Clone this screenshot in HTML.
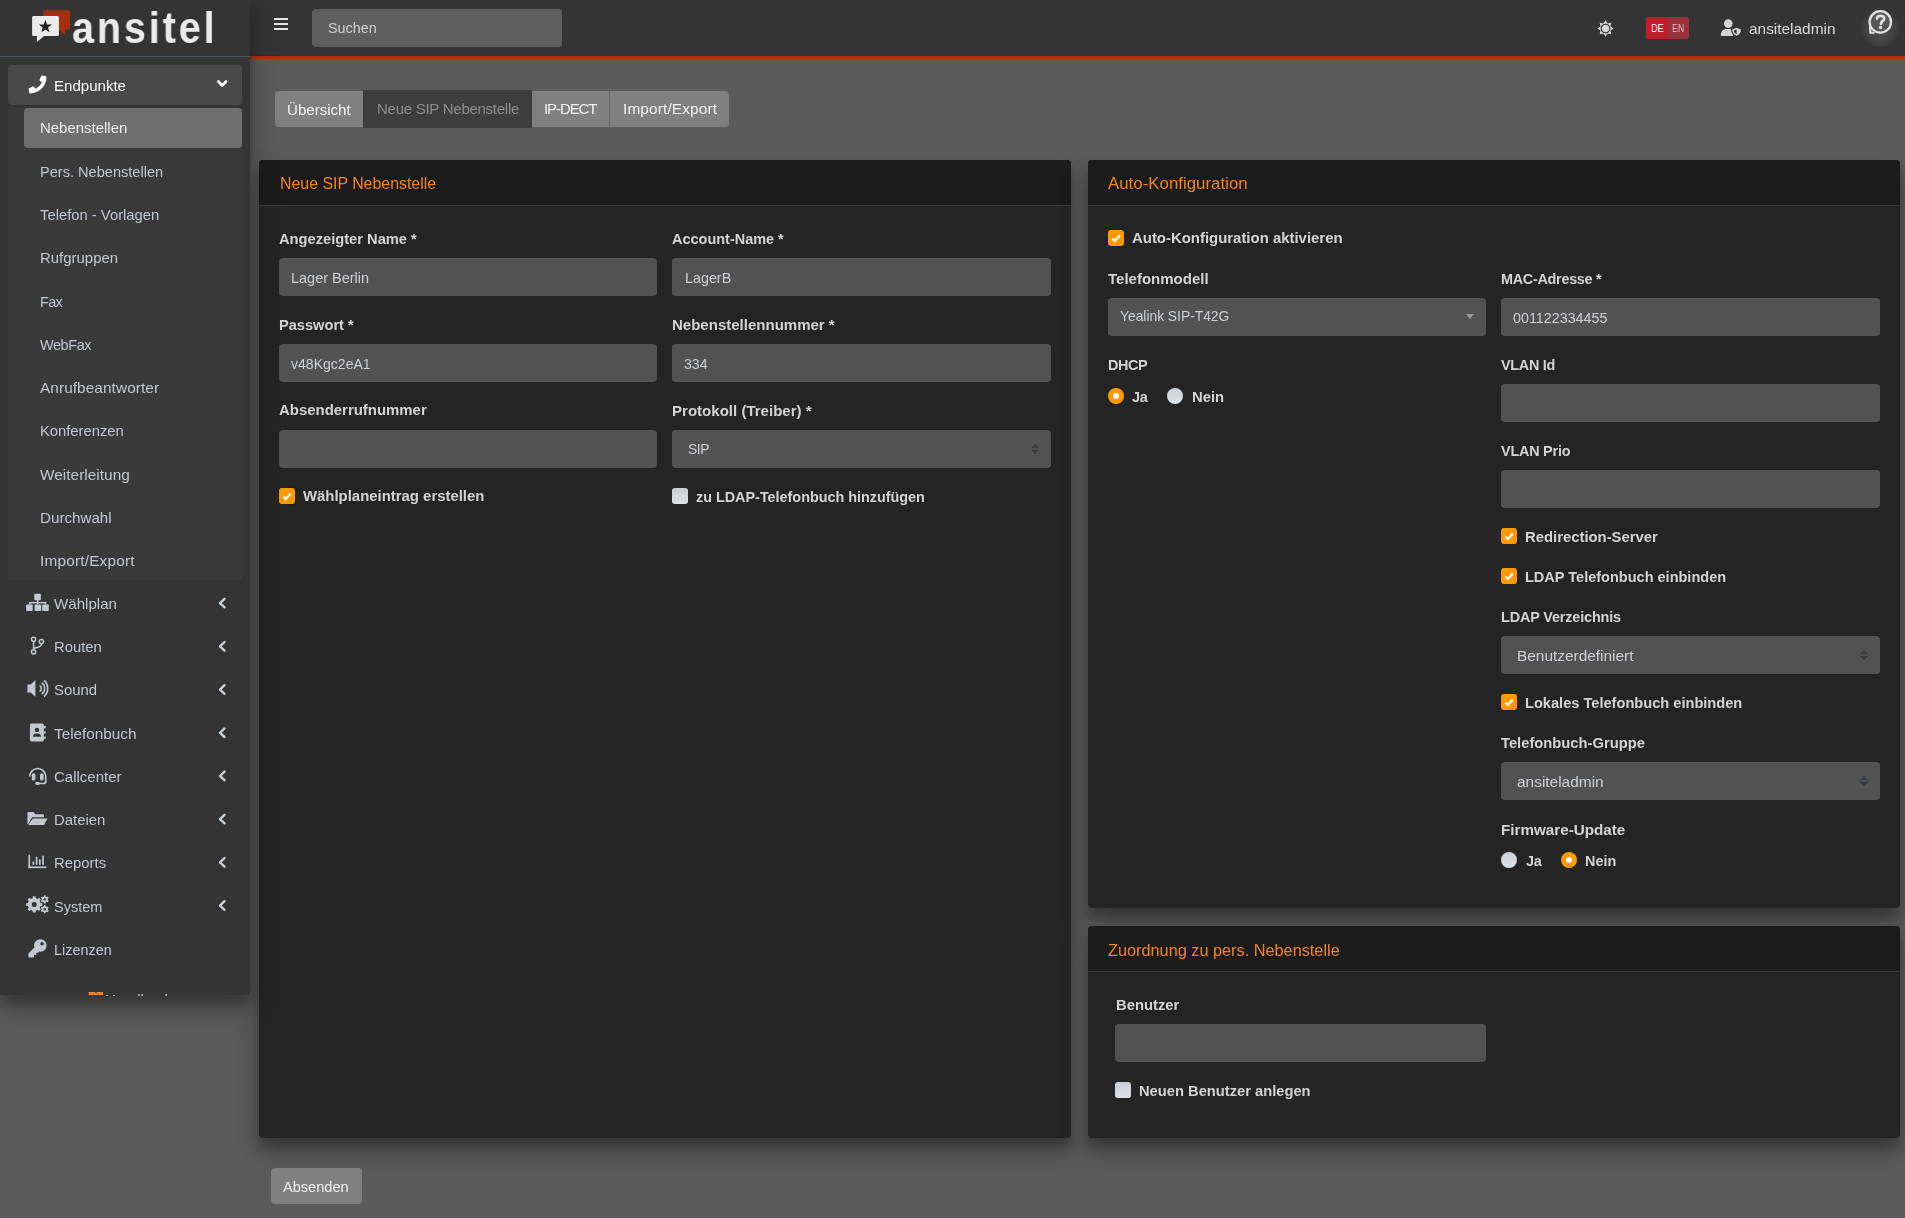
<!DOCTYPE html>
<html lang="de"><head><meta charset="utf-8"><title>ansitel</title>
<style>
*{box-sizing:border-box;margin:0;padding:0}
html,body{width:1905px;height:1218px;overflow:hidden}
body{background:#5b5b5b;font-family:"Liberation Sans",sans-serif;position:relative}
.a{position:absolute}
.t{position:absolute;z-index:10;will-change:transform;white-space:nowrap;font-family:"Liberation Sans",sans-serif}
.nav{left:250px;top:0;width:1655px;height:56px;background:#343434;border-bottom:1px solid #2b3135}
.red{left:250px;top:56px;width:1655px;height:3px;background:#ae300a}
.red2{left:250px;top:59px;width:1655px;height:1px;background:#585d61}
.side{left:0;top:0;width:250px;height:995px;background:#343434;box-shadow:0 14px 28px rgba(0,0,0,.25),0 10px 10px rgba(0,0,0,.22);overflow:hidden;z-index:5}
.brandline{left:0;top:56px;width:250px;height:1px;background:#4b545c}
.ep{left:8px;top:65px;width:234px;height:40px;background:#494949;border-radius:4px}
.tree{left:8px;top:108px;width:234px;height:472px;background:#3a3a3a}
.act{left:24px;top:108px;width:218px;height:40px;background:#6f6f6f;border-radius:4px}
.card{background:#242424;border-radius:4px;box-shadow:0 14px 28px rgba(0,0,0,.25),0 10px 10px rgba(0,0,0,.22);overflow:hidden}
.ch{position:absolute;left:0;top:0;width:100%;height:46px;background:#1b1b1b;border-bottom:1px solid #353b40}
.inp{background:#525252;border-radius:4px;height:38px}
.cb{width:16px;height:16px;border-radius:3px;background:#fe9a00;box-shadow:0 0 0 1px rgba(20,30,40,.5)}
.cbu{width:16px;height:16px;border-radius:3px;background:linear-gradient(#c9ced4,#dfe3e8)}
.rd{width:16px;height:16px;border-radius:50%;background:#fe9a00}
.rd::after{content:"";position:absolute;left:5px;top:5px;width:6px;height:6px;border-radius:50%;background:#fff}
.rdu{width:16px;height:16px;border-radius:50%;background:linear-gradient(#c9ced4,#dfe3e8)}
.btn{background:#808080}

</style></head>
<body>
<div class="a nav"></div>
<div class="a red"></div>
<div class="a red2"></div>
<!-- hamburger -->
<div class="a" style="left:274px;top:18px;width:14px;height:2px;background:#e6e6e6"></div>
<div class="a" style="left:274px;top:23px;width:14px;height:2px;background:#e6e6e6"></div>
<div class="a" style="left:274px;top:28px;width:14px;height:2px;background:#e6e6e6"></div>
<!-- search -->
<div class="a" style="left:312px;top:9px;width:250px;height:38px;background:#5e5e5e;border-radius:4px"></div>
<!-- sun -->
<svg class="a" style="left:1597px;top:19.5px" width="17" height="17" viewBox="0 0 17 17">
<polygon points="8.50,0.30 10.57,3.51 14.30,2.70 13.49,6.43 16.70,8.50 13.49,10.57 14.30,14.30 10.57,13.49 8.50,16.70 6.43,13.49 2.70,14.30 3.51,10.57 0.30,8.50 3.51,6.43 2.70,2.70 6.43,3.51" fill="#d6d6d6"/>
<circle cx="8.5" cy="8.5" r="4.3" fill="#d6d6d6" stroke="#2e2e2e" stroke-width="1.1"/>
</svg>
<!-- DE EN -->
<div class="a" style="left:1646px;top:17px;width:43px;height:22px;border-radius:3px;overflow:hidden">
<div class="a" style="left:0;top:0;width:22px;height:22px;background:#c11f2e"></div>
<div class="a" style="left:22px;top:0;width:21px;height:22px;background:#9a323c"></div>
</div>
<!-- user icon -->
<svg class="a" style="left:1720px;top:19px" width="23" height="18" viewBox="0 0 23 18">
<circle cx="8.3" cy="4.6" r="4.3" fill="#d4d4d4"/>
<path d="M0.8 16.2 C0.8 12 3.2 9.9 6.3 9.9 L10.3 9.9 C11.4 9.9 12.3 10.2 13 10.6 L13 17 L1.6 17 Q0.8 17 0.8 16.2 Z" fill="#d4d4d4"/>
<path d="M16.6 7.6 L22.2 9.8 C22.2 13.8 20.5 16.6 16.6 18 C12.7 16.6 11 13.8 11 9.8 Z" fill="#343434"/>
<path d="M16.6 8.8 L21 10.5 C20.9 13.6 19.5 15.6 16.6 16.8 C13.7 15.6 12.3 13.6 12.2 10.5 Z" fill="#d4d4d4"/>
<path d="M16.6 10.3 L16.6 15.2 C14.9 14.4 14 13 13.8 11.4 Z" fill="#343434"/>
</svg>
<!-- help -->
<div class="a" style="left:1860px;top:6px;width:40px;height:40px;background:radial-gradient(circle at 50% 55%,rgba(255,255,255,.13) 0,rgba(255,255,255,.08) 45%,rgba(255,255,255,0) 70%)"></div>
<svg class="a" style="left:1860px;top:4px" width="40" height="36" viewBox="1860 4 40 36">
<path d="M1870.2 26 L1870.2 32.8 L1874.5 32.8" fill="none" stroke="#e0e0e0" stroke-width="2.1" stroke-linejoin="round"/>
<circle cx="1880.3" cy="21.9" r="10.7" fill="#565656" stroke="#e0e0e0" stroke-width="2.3"/>
<path d="M1877 18.6 C1877 16.7 1878.5 15.9 1880.6 15.9 C1882.8 15.9 1884.2 17 1884.2 18.7 C1884.2 20.6 1881.6 21 1881.2 22.8 L1881 24" fill="none" stroke="#e0e0e0" stroke-width="2.7" stroke-linecap="round"/>
<circle cx="1880.5" cy="27.4" r="1.75" fill="#e0e0e0"/>
</svg>
<!-- sidebar -->
<div class="a side">
 <div class="a brandline"></div>
 <div class="a ep"></div>
 <div class="a tree"></div>
 <div class="a act"></div>
</div>
<!-- logo -->
<svg class="a" style="left:30px;top:8px;z-index:10" width="190" height="40" viewBox="30 8 190 40">
<path d="M44.8 10.3 L68.6 10.3 Q70 10.3 70 11.7 L70 28.3 Q70 29.7 68.6 29.7 L65.1 29.7 L65.1 35.8 L59 29.7 L44.8 29.7 Q43.4 29.7 43.4 28.3 L43.4 11.7 Q43.4 10.3 44.8 10.3 Z" fill="#a2300e"/>
<path d="M33.6 16 L57.4 16 Q58.9 16 58.9 17.5 L58.9 34.6 Q58.9 36.1 57.4 36.1 L44.1 36.1 L36.9 42.1 L36.9 36.1 L33.6 36.1 Q32.1 36.1 32.1 34.6 L32.1 17.5 Q32.1 16 33.6 16 Z" fill="#ebebeb"/>
<polygon points="45.40,19.80 47.02,24.48 51.96,24.57 48.02,27.55 49.46,32.28 45.40,29.45 41.34,32.28 42.78,27.55 38.84,24.57 43.78,24.48" fill="#222"/>
</svg>
<div class="t" style="left:72px;top:2.6px;font-size:45px;line-height:50px;font-weight:700;color:#ebebeb;letter-spacing:3.25px;transform:scaleX(0.88);transform-origin:0 0">ansitel</div>

<!-- tabs -->
<div class="a" style="left:275px;top:91px;width:88px;height:36px;background:#808080;border-radius:4px 0 0 4px"></div>
<div class="a" style="left:363px;top:90px;width:169px;height:38px;background:#3d3d3d"></div>
<div class="a" style="left:532px;top:91px;width:77px;height:36px;background:#808080"></div>
<div class="a" style="left:609px;top:91px;width:1px;height:36px;background:#6a6a6a"></div>
<div class="a" style="left:610px;top:91px;width:119px;height:36px;background:#808080;border-radius:0 4px 4px 0"></div>

<!-- cards -->
<div class="a card" style="left:259px;top:160px;width:812px;height:978px"><div class="ch"></div></div>
<div class="a card" style="left:1088px;top:160px;width:812px;height:748px"><div class="ch"></div></div>
<div class="a card" style="left:1088px;top:926px;width:812px;height:212px"><div class="ch"></div></div>

<!-- left inputs -->
<div class="a inp" style="left:279px;top:258px;width:378px"></div>
<div class="a inp" style="left:672px;top:258px;width:379px"></div>
<div class="a inp" style="left:279px;top:344px;width:378px"></div>
<div class="a inp" style="left:672px;top:344px;width:379px"></div>
<div class="a inp" style="left:279px;top:430px;width:378px"></div>
<div class="a inp" style="left:672px;top:430px;width:379px"></div>
<svg class="a" style="left:1031px;top:444px" width="8" height="10" viewBox="0 0 8 10"><polygon points="0,4 4,0 8,4" fill="#343a40"/><polygon points="0,6 8,6 4,10" fill="#343a40"/></svg>
<div class="a cb" style="left:279px;top:488px"></div>
<div class="a cbu" style="left:672px;top:488px"></div>

<!-- right card -->
<div class="a cb" style="left:1108px;top:230px"></div>
<div class="a inp" style="left:1108px;top:298px;width:378px"></div>
<svg class="a" style="left:1466px;top:314px" width="8" height="6" viewBox="0 0 8 6"><polygon points="0,0 8,0 4,5" fill="#9a9a9a"/></svg>
<div class="a inp" style="left:1501px;top:298px;width:379px"></div>
<div class="a rd" style="left:1108px;top:388px"></div>
<div class="a rdu" style="left:1167px;top:388px"></div>
<div class="a inp" style="left:1501px;top:384px;width:379px"></div>
<div class="a inp" style="left:1501px;top:470px;width:379px"></div>
<div class="a cb" style="left:1501px;top:528px"></div>
<div class="a cb" style="left:1501px;top:568px"></div>
<div class="a inp" style="left:1501px;top:636px;width:379px"></div>
<svg class="a" style="left:1860px;top:650px" width="8" height="10" viewBox="0 0 8 10"><polygon points="0,4 4,0 8,4" fill="#343a40"/><polygon points="0,6 8,6 4,10" fill="#343a40"/></svg>
<div class="a cb" style="left:1501px;top:694px"></div>
<div class="a inp" style="left:1501px;top:762px;width:379px"></div>
<svg class="a" style="left:1860px;top:776px" width="8" height="10" viewBox="0 0 8 10"><polygon points="0,4 4,0 8,4" fill="#343a40"/><polygon points="0,6 8,6 4,10" fill="#343a40"/></svg>
<div class="a rdu" style="left:1501px;top:852px"></div>
<div class="a rd" style="left:1561px;top:852px"></div>

<!-- zuordnung -->
<div class="a inp" style="left:1115px;top:1024px;width:371px"></div>
<div class="a cbu" style="left:1115px;top:1082px"></div>

<!-- submit -->
<div class="a btn" style="left:271px;top:1168px;width:91px;height:36px;border-radius:4px"></div>
<!-- sidebar icons -->
<svg class="a" style="left:0;top:0;z-index:10" width="250" height="995" viewBox="0 0 250 995">
<!-- phone -->
<g transform="translate(46.5,75.4) scale(-0.0352,0.0352)" fill="#ffffff"><path d="M497.39 361.8l-112-48a24 24 0 0 0-28 6.9l-49.6 60.6A370.66 370.66 0 0 1 130.6 204.11l60.6-49.6a23.94 23.94 0 0 0 6.9-28l-48-112A24.16 24.16 0 0 0 122.6.61l-104 24A24 24 0 0 0 0 48c0 256.5 207.9 464 464 464a24 24 0 0 0 23.4-18.6l24-104a24.29 24.29 0 0 0-14.01-27.6z"/></g>
<!-- chevron down -->
<polyline points="218.3,81.5 222.2,85.5 226.1,81.5" fill="none" stroke="#ffffff" stroke-width="2.6" stroke-linecap="round" stroke-linejoin="round"/>
<g fill="#c2c7d0">
<!-- sitemap -->
<rect x="34.3" y="593.7" width="6.6" height="6.6" rx="0.8"/>
<rect x="37" y="600" width="1.4" height="4"/>
<rect x="29" y="601.9" width="17.2" height="1.5"/>
<rect x="29" y="602" width="1.4" height="2.5"/>
<rect x="44.8" y="602" width="1.4" height="2.5"/>
<rect x="26.1" y="604.4" width="6.6" height="6.7" rx="0.8"/>
<rect x="34.6" y="604.4" width="6.6" height="6.7" rx="0.8"/>
<rect x="42.2" y="604.4" width="6.6" height="6.7" rx="0.8"/>
</g>
<g fill="none" stroke="#c2c7d0" stroke-width="1.5">
<!-- code branch -->
<circle cx="33.6" cy="639.3" r="2.1"/>
<circle cx="33.6" cy="651.8" r="2.1"/>
<circle cx="41.4" cy="641.6" r="2.1"/>
<line x1="33.6" y1="641.4" x2="33.6" y2="649.7"/>
<path d="M41.4 643.7 C41.4 647 38.5 647.3 35.5 647.8 C34.3 648 33.6 648.8 33.6 649.7"/>
<!-- volume arcs -->
<path d="M39.6 685.3 A3.6 3.6 0 0 1 39.6 691.5"/>
<path d="M41.8 682.6 A7.4 7.4 0 0 1 41.8 694.2"/>
<path d="M44 680.3 A10.8 10.8 0 0 1 44 696.5" stroke-width="1.7"/>
</g>
<g fill="#c2c7d0">
<path d="M27.4 684.4 L30.6 684.4 L35.4 680 L35.4 696.8 L30.6 692.4 L27.4 692.4 Z"/>
<!-- address book -->
<rect x="29.9" y="723.4" width="14" height="18" rx="1.6"/>
<rect x="43.8" y="726" width="2" height="2.4" rx="0.6"/>
<rect x="43.8" y="731.2" width="2" height="2.4" rx="0.6"/>
<rect x="43.8" y="736.4" width="2" height="2.4" rx="0.6"/>
</g>
<circle cx="37" cy="729.9" r="2.2" fill="#343434"/>
<path d="M33 736.8 C33 734.4 34.6 733.5 36 733.5 L38 733.5 C39.4 733.5 41 734.4 41 736.8 Z" fill="#343434"/>
<!-- headset -->
<g fill="none" stroke="#c2c7d0" stroke-width="1.7">
<path d="M29.7 776.5 A8 8 0 0 1 45.7 776.5 L45.7 781.5 C45.7 783 44.8 783.5 43.5 783.5 L38.5 783.5"/>
</g>
<g fill="#c2c7d0">
<rect x="31.8" y="773.3" width="3.6" height="7.2" rx="1.6"/>
<rect x="40" y="773.3" width="3.6" height="7.2" rx="1.6"/>
<rect x="35.3" y="781.9" width="4.4" height="3" rx="1.4"/>
<!-- folder open -->
<path d="M27.4 813.4 Q27.4 812 28.8 812 L33.4 812 L35.4 814.2 L42.6 814.2 Q44 814.2 44 815.6 L44 817.2 L32 817.2 L28.4 824 L27.4 824 Z"/>
<path d="M32.8 818.6 L47.6 818.6 L44 825.1 L28.2 825.1 Z"/>
<!-- chart -->
<rect x="28.4" y="854.8" width="1.7" height="13.3"/>
<rect x="28.4" y="866.4" width="18" height="1.7"/>
<rect x="32.6" y="861.4" width="1.7" height="3.4"/>
<rect x="35.8" y="856.8" width="1.7" height="8"/>
<rect x="39" y="859.4" width="1.7" height="5.4"/>
<rect x="42.2" y="855.6" width="1.7" height="9.2"/>
</g>
<!-- cogs -->
<g fill="#c2c7d0">
<g transform="translate(34.2,904.4)">
<circle r="6.4"/>
<rect x="-1.5" y="-8.1" width="3" height="16.2" rx="0.5"/><rect x="-1.5" y="-8.1" width="3" height="16.2" rx="0.5" transform="rotate(45)"/><rect x="-1.5" y="-8.1" width="3" height="16.2" rx="0.5" transform="rotate(90)"/><rect x="-1.5" y="-8.1" width="3" height="16.2" rx="0.5" transform="rotate(135)"/>
</g>
<g transform="translate(44.8,899.4)"><circle r="3"/><rect x="-0.85" y="-4.1" width="1.7" height="8.2"/><rect x="-0.85" y="-4.1" width="1.7" height="8.2" transform="rotate(60)"/><rect x="-0.85" y="-4.1" width="1.7" height="8.2" transform="rotate(120)"/></g>
<g transform="translate(44.8,909.2)"><circle r="3"/><rect x="-0.85" y="-4.1" width="1.7" height="8.2"/><rect x="-0.85" y="-4.1" width="1.7" height="8.2" transform="rotate(60)"/><rect x="-0.85" y="-4.1" width="1.7" height="8.2" transform="rotate(120)"/></g>
</g>
<circle cx="34.2" cy="904.4" r="2.5" fill="#343434"/>
<circle cx="44.8" cy="899.4" r="1.2" fill="#343434"/>
<circle cx="44.8" cy="909.2" r="1.2" fill="#343434"/>
<!-- key -->
<g transform="translate(28.4,939.2) scale(0.0355)" fill="#c2c7d0"><path d="M512 176.001C512 273.203 433.202 352 336 352c-11.22 0-22.19-1.062-32.827-3.069l-24.012 27.014A23.999 23.999 0 0 1 261.223 384H224v40c0 13.255-10.745 24-24 24h-40v40c0 13.255-10.745 24-24 24H24c-13.255 0-24-10.745-24-24v-78.059c0-6.365 2.529-12.470 7.029-16.971l161.802-161.802C163.108 213.814 160 195.271 160 176 160 78.798 238.797.001 335.999 0 433.488-.001 512 78.511 512 176.001zM336 128c0 26.51 21.49 48 48 48s48-21.49 48-48-21.49-48-48-48-48 21.49-48 48z"/></g>
<!-- left chevrons -->
<g fill="none" stroke="#c9ced6" stroke-width="2.4" stroke-linecap="round" stroke-linejoin="round">
<polyline points="224.5,598.8 220,603.2 224.5,607.4"/>
<polyline points="224.5,642 220,646.4 224.5,650.6"/>
<polyline points="224.5,685.2 220,689.6 224.5,693.8"/>
<polyline points="224.5,728.4 220,732.8 224.5,737"/>
<polyline points="224.5,771.6 220,776 224.5,780.2"/>
<polyline points="224.5,814.8 220,819.2 224.5,823.4"/>
<polyline points="224.5,858 220,862.4 224.5,866.6"/>
<polyline points="224.5,901.2 220,905.6 224.5,909.8"/>
</g>
<!-- book (cut) -->
<path d="M88.7 992 L95 992 L96 993.5 L97 992 L103 992 L103 995 L88.7 995 Z" fill="#f7851c"/>
</svg>
<!-- checkmarks -->
<svg class="a" style="left:0;top:0;z-index:10" width="1905" height="1218" viewBox="0 0 1905 1218">
<g fill="none" stroke="#fff" stroke-width="2.2" stroke-linecap="butt">
<polyline points="283.3,496.6 285.8,499 290.9,493.6"/>
<polyline points="1112.3,238.6 1114.8,241 1119.9,235.6"/>
<polyline points="1505.3,536.6 1507.8,539 1512.9,533.6"/>
<polyline points="1505.3,576.6 1507.8,579 1512.9,573.6"/>
<polyline points="1505.3,702.6 1507.8,705 1512.9,699.6"/>
</g>
</svg>

<div class="t" id="t0" style="left:327.7px;top:20.92px;font-size:14.37px;line-height:14.37px;font-weight:400;color:#d2d2d2;">Suchen</div>
<div class="t" id="t1" style="left:1651.0px;top:22.00px;font-size:11.60px;line-height:11.60px;font-weight:400;color:#ffffff;transform:scaleX(0.80);transform-origin:0 0">DE</div>
<div class="t" id="t2" style="left:1671.9px;top:22.00px;font-size:11.60px;line-height:11.60px;font-weight:400;color:#e3c3c6;transform:scaleX(0.76);transform-origin:0 0">EN</div>
<div class="t" id="t3" style="left:1749.0px;top:20.59px;font-size:15.41px;line-height:15.41px;font-weight:400;color:#d9d9d9;">ansiteladmin</div>
<div class="t" id="t4" style="left:54.3px;top:78.17px;font-size:15.05px;line-height:15.05px;font-weight:400;color:#fafafa;">Endpunkte</div>
<div class="t" id="t5" style="left:40.3px;top:121.22px;font-size:14.96px;line-height:14.96px;font-weight:400;color:#ececec;">Nebenstellen</div>
<div class="t" id="t6" style="left:40.3px;top:165.10px;font-size:14.59px;line-height:14.59px;font-weight:400;color:#c2c7d0;">Pers. Nebenstellen</div>
<div class="t" id="t7" style="left:40.3px;top:208.19px;font-size:14.81px;line-height:14.81px;font-weight:400;color:#c2c7d0;">Telefon - Vorlagen</div>
<div class="t" id="t8" style="left:40.3px;top:250.83px;font-size:14.95px;line-height:14.95px;font-weight:400;color:#c2c7d0;">Rufgruppen</div>
<div class="t" id="t9" style="left:40.3px;top:294.77px;font-size:14.45px;line-height:14.45px;font-weight:400;color:#c2c7d0;letter-spacing:-0.694px;">Fax</div>
<div class="t" id="t10" style="left:40.3px;top:337.97px;font-size:14.45px;line-height:14.45px;font-weight:400;color:#c2c7d0;letter-spacing:-0.403px;">WebFax</div>
<div class="t" id="t11" style="left:40.3px;top:380.23px;font-size:15.35px;line-height:15.35px;font-weight:400;color:#c2c7d0;letter-spacing:0.090px;">Anrufbeantworter</div>
<div class="t" id="t12" style="left:40.3px;top:424.21px;font-size:14.78px;line-height:14.78px;font-weight:400;color:#c2c7d0;">Konferenzen</div>
<div class="t" id="t13" style="left:40.3px;top:466.62px;font-size:15.35px;line-height:15.35px;font-weight:400;color:#c2c7d0;letter-spacing:0.043px;">Weiterleitung</div>
<div class="t" id="t14" style="left:40.3px;top:509.91px;font-size:15.18px;line-height:15.18px;font-weight:400;color:#c2c7d0;">Durchwahl</div>
<div class="t" id="t15" style="left:40.3px;top:553.03px;font-size:15.35px;line-height:15.35px;font-weight:400;color:#c2c7d0;letter-spacing:0.203px;">Import/Export</div>
<div class="t" id="t16" style="left:53.6px;top:596.34px;font-size:15.12px;line-height:15.12px;font-weight:400;color:#c2c7d0;">Wählplan</div>
<div class="t" id="t17" style="left:53.6px;top:640.20px;font-size:14.80px;line-height:14.80px;font-weight:400;color:#c2c7d0;">Routen</div>
<div class="t" id="t18" style="left:53.6px;top:683.35px;font-size:14.90px;line-height:14.90px;font-weight:400;color:#c2c7d0;">Sound</div>
<div class="t" id="t19" style="left:53.6px;top:725.86px;font-size:15.29px;line-height:15.29px;font-weight:400;color:#c2c7d0;">Telefonbuch</div>
<div class="t" id="t20" style="left:53.6px;top:769.19px;font-size:15.02px;line-height:15.02px;font-weight:400;color:#c2c7d0;">Callcenter</div>
<div class="t" id="t21" style="left:53.6px;top:812.95px;font-size:14.89px;line-height:14.89px;font-weight:400;color:#c2c7d0;">Dateien</div>
<div class="t" id="t22" style="left:53.6px;top:856.15px;font-size:14.89px;line-height:14.89px;font-weight:400;color:#c2c7d0;">Reports</div>
<div class="t" id="t23" style="left:53.6px;top:899.54px;font-size:14.52px;line-height:14.52px;font-weight:400;color:#c2c7d0;">System</div>
<div class="t" id="t24" style="left:53.6px;top:942.77px;font-size:14.45px;line-height:14.45px;font-weight:400;color:#c2c7d0;">Lizenzen</div>
<div class="t" id="t25" style="left:105.0px;top:992.55px;font-size:14.90px;line-height:14.90px;font-weight:400;color:#c2c7d0;clip-path:inset(0 0 12.6px 0)">Handbuch</div>
<div class="t" id="t26" style="left:287.4px;top:101.56px;font-size:15.07px;line-height:15.07px;font-weight:400;color:#f2f2f2;">Übersicht</div>
<div class="t" id="t27" style="left:376.5px;top:101.61px;font-size:14.97px;line-height:14.97px;font-weight:400;color:#8d8d8d;letter-spacing:-0.247px;">Neue SIP Nebenstelle</div>
<div class="t" id="t28" style="left:544.0px;top:101.61px;font-size:14.97px;line-height:14.97px;font-weight:400;color:#f2f2f2;letter-spacing:-1.063px;">IP-DECT</div>
<div class="t" id="t29" style="left:622.8px;top:101.38px;font-size:15.43px;line-height:15.43px;font-weight:400;color:#f2f2f2;letter-spacing:0.121px;">Import/Export</div>
<div class="t" id="t30" style="left:279.5px;top:176.25px;font-size:15.90px;line-height:15.90px;font-weight:400;color:#f5831e;">Neue SIP Nebenstelle</div>
<div class="t" id="t31" style="left:1107.7px;top:175.80px;font-size:16.79px;line-height:16.79px;font-weight:400;color:#f5831e;letter-spacing:0.038px;">Auto-Konfiguration</div>
<div class="t" id="t32" style="left:1107.9px;top:941.65px;font-size:16.29px;line-height:16.29px;font-weight:400;color:#f5831e;">Zuordnung zu pers. Nebenstelle</div>
<div class="t" id="t33" style="left:278.5px;top:231.56px;font-size:14.68px;line-height:14.68px;font-weight:700;color:#d4d4d4;">Angezeigter Name *</div>
<div class="t" id="t34" style="left:672.0px;top:231.67px;font-size:14.47px;line-height:14.47px;font-weight:700;color:#d4d4d4;">Account-Name *</div>
<div class="t" id="t35" style="left:278.5px;top:317.59px;font-size:14.61px;line-height:14.61px;font-weight:700;color:#d4d4d4;">Passwort *</div>
<div class="t" id="t36" style="left:672.0px;top:316.88px;font-size:15.03px;line-height:15.03px;font-weight:700;color:#d4d4d4;">Nebenstellennummer *</div>
<div class="t" id="t37" style="left:278.5px;top:402.93px;font-size:14.94px;line-height:14.94px;font-weight:700;color:#d4d4d4;">Absenderrufnummer</div>
<div class="t" id="t38" style="left:672.0px;top:402.87px;font-size:15.06px;line-height:15.06px;font-weight:700;color:#d4d4d4;">Protokoll (Treiber) *</div>
<div class="t" id="t39" style="left:291.4px;top:270.66px;font-size:14.47px;line-height:14.47px;font-weight:400;color:#cdd0d4;">Lager Berlin</div>
<div class="t" id="t40" style="left:684.6px;top:270.73px;font-size:14.33px;line-height:14.33px;font-weight:400;color:#cdd0d4;">LagerB</div>
<div class="t" id="t41" style="left:291.4px;top:356.87px;font-size:14.06px;line-height:14.06px;font-weight:400;color:#cdd0d4;">v48Kgc2eA1</div>
<div class="t" id="t42" style="left:684.4px;top:356.83px;font-size:14.14px;line-height:14.14px;font-weight:400;color:#cdd0d4;">334</div>
<div class="t" id="t43" style="left:688.4px;top:442.96px;font-size:13.87px;line-height:13.87px;font-weight:400;color:#cdd0d4;letter-spacing:-0.452px;">SIP</div>
<div class="t" id="t44" style="left:302.8px;top:488.74px;font-size:14.92px;line-height:14.92px;font-weight:700;color:#d4d4d4;">Wählplaneintrag erstellen</div>
<div class="t" id="t45" style="left:696.4px;top:489.50px;font-size:14.40px;line-height:14.40px;font-weight:700;color:#d4d4d4;letter-spacing:-0.009px;">zu LDAP-Telefonbuch hinzufügen</div>
<div class="t" id="t46" style="left:1131.6px;top:231.23px;font-size:14.93px;line-height:14.93px;font-weight:700;color:#d4d4d4;">Auto-Konfiguration aktivieren</div>
<div class="t" id="t47" style="left:1108.0px;top:271.10px;font-size:15.00px;line-height:15.00px;font-weight:700;color:#d4d4d4;">Telefonmodell</div>
<div class="t" id="t48" style="left:1501.0px;top:271.70px;font-size:14.40px;line-height:14.40px;font-weight:700;color:#d4d4d4;letter-spacing:-0.278px;">MAC-Adresse *</div>
<div class="t" id="t49" style="left:1119.9px;top:309.76px;font-size:13.87px;line-height:13.87px;font-weight:400;color:#cdd0d4;letter-spacing:-0.021px;">Yealink SIP-T42G</div>
<div class="t" id="t50" style="left:1513.4px;top:310.64px;font-size:14.32px;line-height:14.32px;font-weight:400;color:#cdd0d4;">001122334455</div>
<div class="t" id="t51" style="left:1108.0px;top:358.30px;font-size:14.40px;line-height:14.40px;font-weight:700;color:#d4d4d4;letter-spacing:-0.375px;">DHCP</div>
<div class="t" id="t52" style="left:1501.0px;top:358.00px;font-size:14.40px;line-height:14.40px;font-weight:700;color:#d4d4d4;letter-spacing:-0.272px;">VLAN Id</div>
<div class="t" id="t53" style="left:1131.8px;top:390.00px;font-size:14.40px;line-height:14.40px;font-weight:700;color:#d4d4d4;letter-spacing:-0.160px;">Ja</div>
<div class="t" id="t54" style="left:1191.5px;top:389.77px;font-size:14.86px;line-height:14.86px;font-weight:700;color:#d4d4d4;">Nein</div>
<div class="t" id="t55" style="left:1501.0px;top:444.10px;font-size:14.40px;line-height:14.40px;font-weight:700;color:#d4d4d4;letter-spacing:-0.212px;">VLAN Prio</div>
<div class="t" id="t56" style="left:1525.3px;top:529.78px;font-size:14.85px;line-height:14.85px;font-weight:700;color:#d4d4d4;">Redirection-Server</div>
<div class="t" id="t57" style="left:1525.3px;top:569.94px;font-size:14.52px;line-height:14.52px;font-weight:700;color:#d4d4d4;">LDAP Telefonbuch einbinden</div>
<div class="t" id="t58" style="left:1501.0px;top:610.00px;font-size:14.40px;line-height:14.40px;font-weight:700;color:#d4d4d4;letter-spacing:-0.136px;">LDAP Verzeichnis</div>
<div class="t" id="t59" style="left:1517.3px;top:648.39px;font-size:15.41px;line-height:15.41px;font-weight:400;color:#cdd0d4;">Benutzerdefiniert</div>
<div class="t" id="t60" style="left:1525.4px;top:695.89px;font-size:14.62px;line-height:14.62px;font-weight:700;color:#d4d4d4;">Lokales Telefonbuch einbinden</div>
<div class="t" id="t61" style="left:1501.0px;top:735.82px;font-size:14.76px;line-height:14.76px;font-weight:700;color:#d4d4d4;">Telefonbuch-Gruppe</div>
<div class="t" id="t62" style="left:1517.3px;top:774.38px;font-size:15.44px;line-height:15.44px;font-weight:400;color:#cdd0d4;">ansiteladmin</div>
<div class="t" id="t63" style="left:1501.0px;top:821.89px;font-size:15.22px;line-height:15.22px;font-weight:700;color:#d4d4d4;">Firmware-Update</div>
<div class="t" id="t64" style="left:1525.5px;top:854.00px;font-size:14.40px;line-height:14.40px;font-weight:700;color:#d4d4d4;letter-spacing:-0.310px;">Ja</div>
<div class="t" id="t65" style="left:1585.2px;top:854.00px;font-size:14.40px;line-height:14.40px;font-weight:700;color:#d4d4d4;">Nein</div>
<div class="t" id="t66" style="left:1115.5px;top:997.59px;font-size:14.82px;line-height:14.82px;font-weight:700;color:#d4d4d4;">Benutzer</div>
<div class="t" id="t67" style="left:1139.0px;top:1083.94px;font-size:14.71px;line-height:14.71px;font-weight:700;color:#d4d4d4;">Neuen Benutzer anlegen</div>
<div class="t" id="t68" style="left:283.0px;top:1179.70px;font-size:14.59px;line-height:14.59px;font-weight:400;color:#f0f0f0;">Absenden</div>
</body></html>
